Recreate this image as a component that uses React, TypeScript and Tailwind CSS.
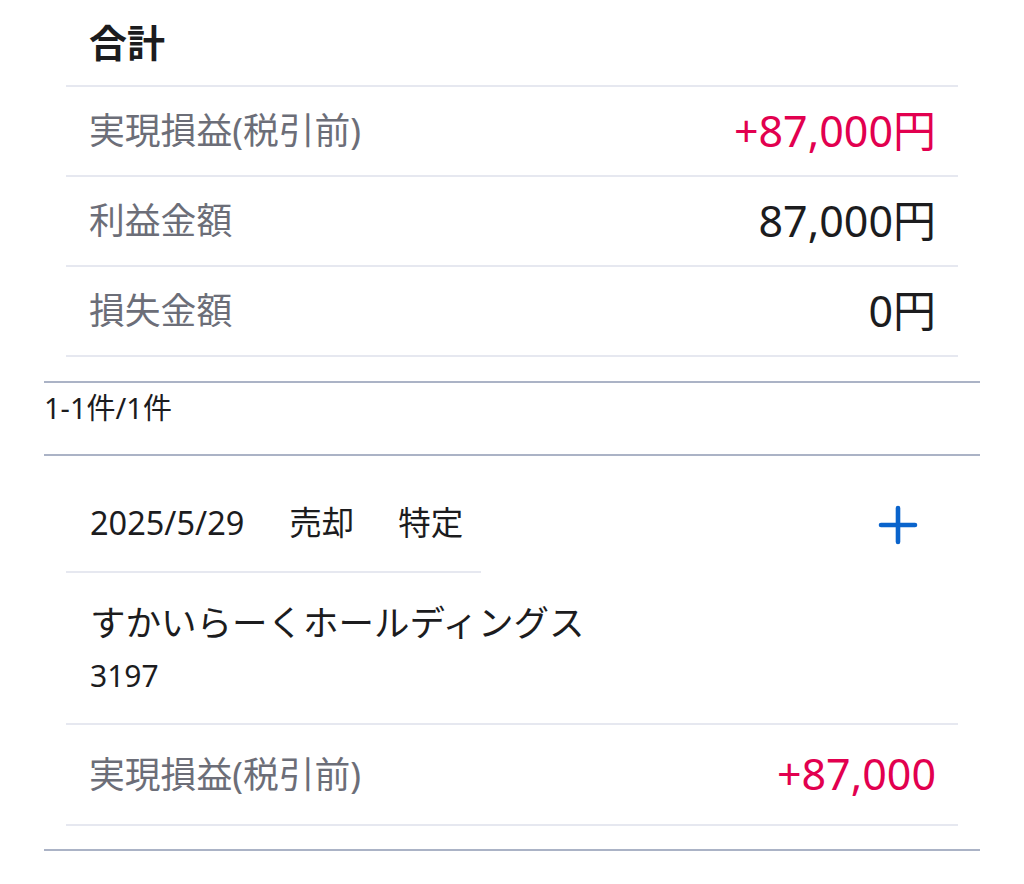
const font = { fontFamily: '"Noto Sans", "Noto Sans CJK JP", sans-serif' };

// ── Summary rows ────────────────────────────────
const rows = [
  { label: '実現損益(税引前)', value: '+87,000円', red: true },
  { label: '利益金額', value: '87,000円', red: false },
  { label: '損失金額', value: '0円', red: false },
];

function PlusIcon() {
  return (
    <svg width="40" height="40" viewBox="0 0 40 40" fill="none" stroke="#0a64cc" strokeWidth="4.6" strokeLinecap="round">
      <path d="M20 3v34M3 20h34" />
    </svg>
  );
}

export default function App() {
  return (
    <div className="w-[1024px] h-[884px] overflow-hidden bg-white text-[#1c1c1e]" style={font}>
      <div className="px-[44px]">
        {/* Total */}
        <section className="px-[22px]">
          <h2 className="h-[87px] border-b-2 border-[#e6e8f0] flex items-center pl-[23px] text-[38px] font-bold">
            合計
          </h2>
          {rows.map(r => (
            <div
              key={r.label}
              className="h-[90px] border-b-2 border-[#e6e8f0] flex items-center justify-between pl-[23px] pr-[22px]"
            >
              <span className="text-[35.8px] text-[#6c6e78]">{r.label}</span>
              <span className={`text-[43px] ${r.red ? 'text-[#e2004f]' : 'text-[#1c1c1e]'}`}>{r.value}</span>
            </div>
          ))}
        </section>

        {/* Count */}
        <div className="mt-[24px] h-[75px] border-y-2 border-[#abb3c6] flex items-center text-[29px] pb-[22px]">
          1-1件/1件
        </div>

        {/* Transaction */}
        <section className="px-[22px] border-b-2 border-[#abb3c6] pb-[23px]">
          <div className="h-[117px] flex">
            <div className="w-[415px] border-b-2 border-[#e6e8f0] flex items-center pl-[24px] pt-[20px] text-[32.5px]">
              <span>2025/5/29</span>
              <span className="ml-[45px]">売却</span>
              <span className="ml-[44px]">特定</span>
            </div>
            <div className="flex-1 flex items-center justify-end pr-[40px] pt-[20px]">
              <PlusIcon />
            </div>
          </div>
          <div className="h-[152px] border-b-2 border-[#e6e8f0] pl-[24px] pt-[27px]">
            <div className="text-[35.5px] leading-[44px]">すかいらーくホールディングス</div>
            <div className="text-[30px] leading-[36px] mt-[14px]">3197</div>
          </div>
          <div className="h-[101px] border-b-2 border-[#e6e8f0] flex items-center justify-between pl-[23px] pr-[22px]">
            <span className="text-[35.8px] text-[#6c6e78]">実現損益(税引前)</span>
            <span className="text-[43px] text-[#e2004f]">+87,000</span>
          </div>
        </section>
      </div>
    </div>
  );
}
